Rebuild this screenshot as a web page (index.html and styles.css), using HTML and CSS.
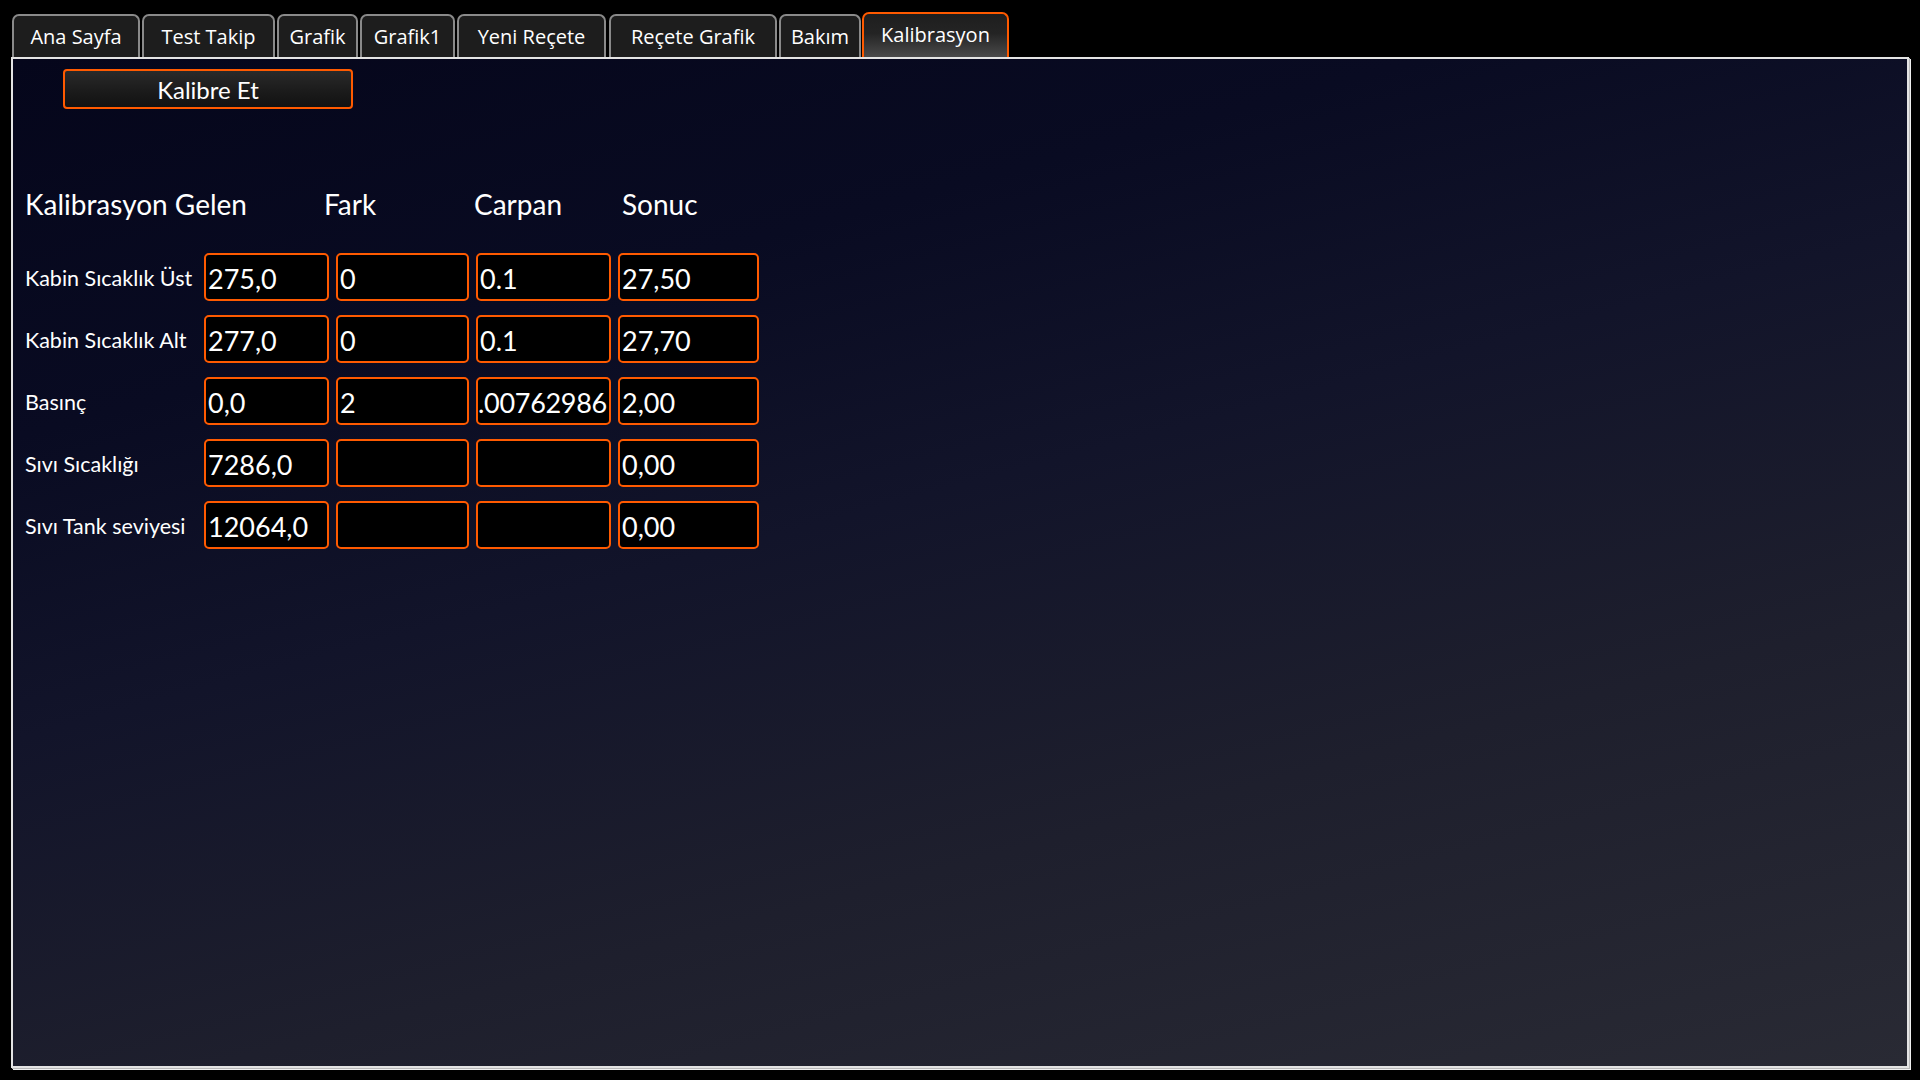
FILE: index.html
```html
<!DOCTYPE html>
<html lang="tr">
<head>
<meta charset="utf-8">
<title>Kalibrasyon</title>
<link rel="stylesheet" href="styles.css">
</head>
<body>
<div class="app">
  <nav class="tabs">
    <div class="tab t-ana">Ana Sayfa</div>
    <div class="tab t-test">Test Takip</div>
    <div class="tab t-grafik">Grafik</div>
    <div class="tab t-grafik1">Grafik1</div>
    <div class="tab t-yeni">Yeni Reçete</div>
    <div class="tab t-recete">Reçete Grafik</div>
    <div class="tab t-bakim">Bakım</div>
    <div class="tab t-kal active">Kalibrasyon</div>
  </nav>
  <main class="panel">
    <button class="btn-kalibre">Kalibre Et</button>
    <div class="headers">
      <div class="h h1">Kalibrasyon Gelen</div>
      <div class="h h2">Fark</div>
      <div class="h h3">Carpan</div>
      <div class="h h4">Sonuc</div>
    </div>
    <div class="grid">
      <div class="label">Kabin Sıcaklık Üst</div>
      <div class="box">275,0</div>
      <div class="box">0</div>
      <div class="box">0.1</div>
      <div class="box">27,50</div>

      <div class="label">Kabin Sıcaklık Alt</div>
      <div class="box">277,0</div>
      <div class="box">0</div>
      <div class="box">0.1</div>
      <div class="box">27,70</div>

      <div class="label">Basınç</div>
      <div class="box">0,0</div>
      <div class="box">2</div>
      <div class="box clip">.00762986</div>
      <div class="box">2,00</div>

      <div class="label">Sıvı Sıcaklığı</div>
      <div class="box">7286,0</div>
      <div class="box"></div>
      <div class="box"></div>
      <div class="box">0,00</div>

      <div class="label">Sıvı Tank seviyesi</div>
      <div class="box">12064,0</div>
      <div class="box"></div>
      <div class="box"></div>
      <div class="box">0,00</div>
    </div>
  </main>
</div>
</body>
</html>
```
FILE: styles.css
```css
html, body {
  margin: 0;
  padding: 0;
  background: #000;
  width: 1920px;
  height: 1080px;
  overflow: hidden;
}

.app {
  padding: 12px 11px 0 11px;
  width: 1898px;
  display: flex;
  flex-direction: column;
}

.tabs {
  display: flex;
  align-items: flex-end;
  gap: 2px;
  height: 45px;
  padding-left: 1px;
}

.tab {
  box-sizing: border-box;
  height: 43px;
  border: 2px solid #8a8a8a;
  border-bottom: none;
  border-radius: 7px 7px 0 0;
  background: #1d1d1d;
  color: #fff;
  font-family: "Open Sans", "Noto Sans", sans-serif;
  font-size: 20px;
  display: flex;
  align-items: center;
  justify-content: center;
  padding-bottom: 1px;
}

.t-ana { width: 128px; }
.t-test { width: 133px; }
.t-grafik { width: 81px; }
.t-grafik1 { width: 95px; }
.t-yeni { width: 149px; }
.t-recete { width: 168px; margin-left: 1px; }
.t-bakim { width: 82px; }
.t-kal { width: 147px; }

.tab.active {
  height: 45px;
  border-color: #ff5a00;
  background: linear-gradient(to bottom, #1e1e1e 0%, #242424 45%, #4a4a4a 100%);
  padding-bottom: 3px;
  margin-left: -1px;
}

.panel {
  box-sizing: border-box;
  height: 1011px;
  border: 2px solid #e4e4e4;
  box-shadow: 1px 1px 0 #b8b8b8, 2px 2px 0 #f0f0f0;
  background: linear-gradient(165deg, #05061b 0%, #090b22 25%, #12142a 45%, #1e1f2d 70%, #292a34 100%);
  padding: 10px 0 0 12px;
  display: flex;
  flex-direction: column;
  align-items: flex-start;
}

.btn-kalibre {
  box-sizing: border-box;
  margin-left: 38px;
  width: 290px;
  height: 40px;
  border: 2px solid #ff5a00;
  border-radius: 4px;
  background: linear-gradient(to bottom, #2a2a2a 0%, #1a1a1a 60%, #121212 100%);
  color: #fff;
  font-family: "Lato", "Open Sans", sans-serif;
  font-size: 24px;
  padding: 0;
  line-height: 36px;
  padding-top: 1px;
}

.headers {
  margin-top: 78px;
  display: grid;
  grid-template-columns: 299px 150px 148px auto;
  padding-left: 0;
  color: #fff;
  font-family: "Lato", "Open Sans", sans-serif;
  font-size: 28px;
  line-height: 34px;
}

.grid {
  margin-top: 32px;
  display: grid;
  grid-template-columns: 172px 125px 133px 135px 141px;
  column-gap: 7px;
  row-gap: 14px;
  grid-auto-rows: 48px;
}

.label {
  color: #fff;
  font-family: "Lato", "Open Sans", sans-serif;
  font-size: 21.5px;
  display: flex;
  align-items: center;
  padding-left: 0;
  padding-top: 2px;
  white-space: nowrap;
}

.box {
  box-sizing: border-box;
  border: 2px solid #ff5a00;
  border-radius: 5px;
  background: #000;
  color: #fff;
  font-family: "Lato", "Open Sans", sans-serif;
  font-size: 27px;
  display: flex;
  align-items: center;
  padding: 2px 0 0 2px;
  overflow: hidden;
  white-space: nowrap;
}

.box.clip {
  padding-left: 0;
  letter-spacing: -0.3px;
}
```
